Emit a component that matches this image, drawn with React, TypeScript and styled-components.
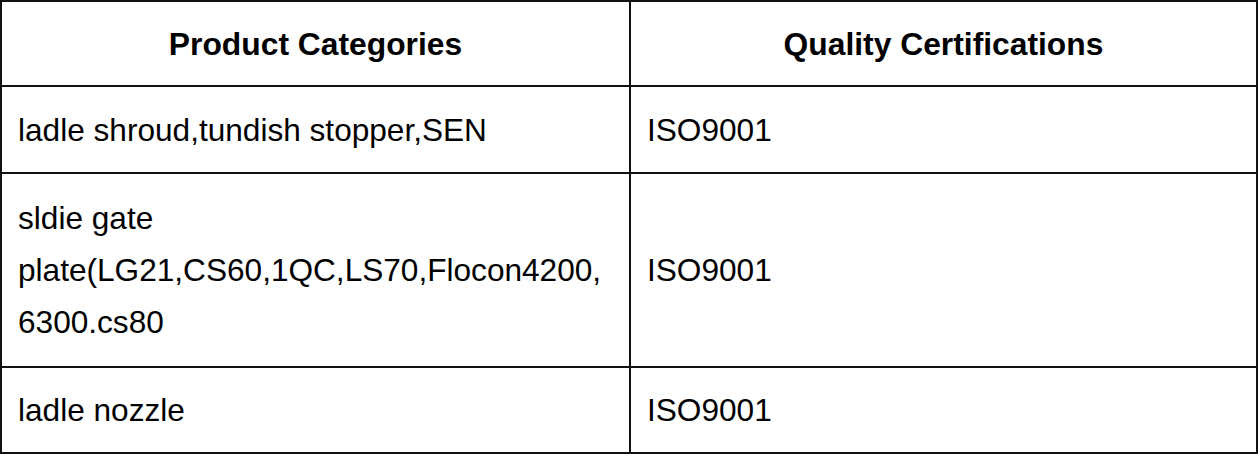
import { FC } from "react";
import styled, { createGlobalStyle } from "styled-components";

const GlobalStyle = createGlobalStyle`
    html, body {
        margin: 0;
        padding: 0;
        background: #ffffff;
    }
    body {
        font-family: "Liberation Sans", Arial, sans-serif;
        color: #000000;
    }
`;

const Table = styled.table`
    width: 1258px;
    border-collapse: collapse;
    table-layout: fixed;
    border: 2px solid #111111;
    font-family: "Liberation Sans", Arial, sans-serif;
    font-size: 31.6px;
    line-height: 52px;
`;

const HeadCell = styled.th`
    border: 2px solid #111111;
    height: 83px;
    padding: 0 16px;
    font-weight: bold;
    font-size: 31.8px;
    text-align: center;
    vertical-align: middle;
    color: #000000;
`;

const Cell = styled.td<{ $h: number }>`
    border: 2px solid #111111;
    height: ${(p) => p.$h}px;
    padding: 0 16px;
    text-align: left;
    vertical-align: middle;
    color: #000000;
    word-break: break-word;
`;

type Row = { category: string[]; cert: string; h: number };

const rows: Row[] = [
    { category: ["ladle shroud,tundish stopper,SEN"], cert: "ISO9001", h: 85 },
    {
        category: ["sldie gate", "plate(LG21,CS60,1QC,LS70,Flocon4200,", "6300.cs80"],
        cert: "ISO9001",
        h: 192,
    },
    { category: ["ladle nozzle"], cert: "ISO9001", h: 84 },
];

const App: FC = () => {
    return (
        <>
            <GlobalStyle />
            <Table>
                <colgroup>
                    <col style={{ width: "629px" }} />
                    <col />
                </colgroup>
                <thead>
                    <tr>
                        <HeadCell>Product Categories</HeadCell>
                        <HeadCell>Quality Certifications</HeadCell>
                    </tr>
                </thead>
                <tbody>
                    {rows.map((r, i) => (
                        <tr key={i}>
                            <Cell $h={r.h}>
                                {r.category.map((line, j) => (
                                    <div key={j}>{line}</div>
                                ))}
                            </Cell>
                            <Cell $h={r.h}>{r.cert}</Cell>
                        </tr>
                    ))}
                </tbody>
            </Table>
        </>
    );
};

export default App;
